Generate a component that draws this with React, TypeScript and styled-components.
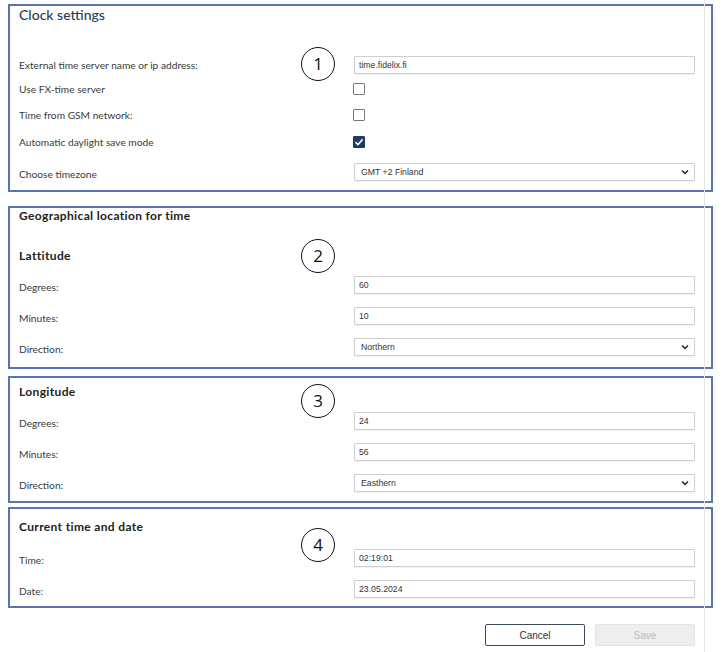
import React from "react";
import styled, { createGlobalStyle } from "styled-components";

const GlobalStyle = createGlobalStyle`
  html, body {
    margin: 0;
    padding: 0;
    background: #ffffff;
  }
  body {
    font-family: Lato, "Open Sans", "Liberation Sans", sans-serif;
    color: #333333;
  }
`;

type RowData =
  | { kind: "input"; label: string; value: string }
  | { kind: "select"; label: string; value: string }
  | { kind: "check"; label: string; checked: boolean };

export default function App() {
  return (
    <Page>
      <GlobalStyle />

      <Section $top={0} $bottom={2}>
        <Marker $top={41}>1</Marker>
        <Title>Clock settings</Title>
        <Rows $gap={27}>
          <Row $h={26}>
            <Label>External time server name or ip address:</Label>
            <TextBox value="time.fidelix.fi" readOnly />
          </Row>
          <Row $h={22}>
            <Label>Use FX-time server</Label>
            <Check $checked={false} />
          </Row>
          <Row $h={29}>
            <Label>Time from GSM network:</Label>
            <Check $checked={false} />
          </Row>
          <Row $h={26}>
            <Label>Automatic daylight save mode</Label>
            <Check $checked={true}>
              <svg width="10" height="10" viewBox="0 0 10 10">
                <path d="M1.5 5.2 L4 7.5 L8.6 2.4" fill="none" stroke="#fff" strokeWidth="1.6" />
              </svg>
            </Check>
          </Row>
          <Row $h={33}>
            <Label $shift={2}>Choose timezone</Label>
            <SelectBox value="GMT +2 Finland" />
          </Row>
        </Rows>
      </Section>

      <Section $top={14} $bottom={5}>
        <Marker $top={31}>2</Marker>
        <Heading>Geographical location for time</Heading>
        <SubHeading $gap={24}>Lattitude</SubHeading>
        <FieldList
          gap={5}
          rows={[
            { kind: "input", label: "Degrees:", value: "60" },
            { kind: "input", label: "Minutes:", value: "10" },
            { kind: "select", label: "Direction:", value: "Northern" },
          ]}
        />
      </Section>

      <Section $top={7} $bottom={3} $pad={6}>
        <Marker $top={6}>3</Marker>
        <SubHeading $gap={0}>Longitude</SubHeading>
        <FieldList
          gap={5}
          rows={[
            { kind: "input", label: "Degrees:", value: "24" },
            { kind: "input", label: "Minutes:", value: "56" },
            { kind: "select", label: "Direction:", value: "Easthern" },
          ]}
        />
      </Section>

      <Section $top={4} $bottom={2} $pad={10}>
        <Marker $top={19}>4</Marker>
        <SubHeading $gap={0}>Current time and date</SubHeading>
        <FieldList
          gap={7}
          rows={[
            { kind: "input", label: "Time:", value: "02:19:01" },
            { kind: "input", label: "Date:", value: "23.05.2024" },
          ]}
        />
      </Section>

      <Footer>
        <Button>Cancel</Button>
        <Button $disabled>Save</Button>
      </Footer>
    </Page>
  );
}

function FieldList({ rows, gap }: { rows: RowData[]; gap: number }) {
  return (
    <Rows $gap={gap}>
      {rows.map((r) => (
        <Row key={r.label} $h={31}>
          <Label $shift={2}>{r.label}</Label>
          {r.kind === "input" && <TextBox value={r.value} readOnly />}
          {r.kind === "select" && <SelectBox value={r.value} />}
          {r.kind === "check" && <Check $checked={r.checked} />}
        </Row>
      ))}
    </Rows>
  );
}

function SelectBox({ value }: { value: string }) {
  return (
    <SelectWrap>
      <span>{value}</span>
      <svg width="8" height="6" viewBox="0 0 8 6">
        <path d="M1 1.5 L4 4.5 L7 1.5" fill="none" stroke="#222" strokeWidth="1.5" />
      </svg>
    </SelectWrap>
  );
}

const Page = styled.div`
  position: relative;
  width: 728px;
  height: 652px;
  padding-top: 4px;
  box-sizing: border-box;
  overflow: hidden;

  &::after {
    content: "";
    position: absolute;
    top: 0;
    bottom: 0;
    left: 704px;
    width: 1px;
    background: #e6e6e6;
  }
`;

const Section = styled.section<{ $top: number; $bottom: number; $pad?: number }>`
  position: relative;
  margin: ${(p) => p.$top}px 0 0 8px;
  width: 705px;
  box-sizing: border-box;
  border: 2px solid #5a74ad;
  padding: ${(p) => p.$pad ?? 0}px 16px ${(p) => p.$bottom}px 9px;
  display: flex;
  flex-direction: column;
`;

const Marker = styled.div<{ $top: number }>`
  position: absolute;
  left: 291px;
  top: ${(p) => p.$top}px;
  width: 34px;
  height: 34px;
  border: 1px solid #111;
  border-radius: 50%;
  display: flex;
  align-items: center;
  justify-content: center;
  font-family: "Open Sans", "Liberation Sans", sans-serif;
  font-size: 17px;
  color: #111;
  background: #fff;
  box-sizing: border-box;
  padding-bottom: 2px;
  z-index: 2;
`;

const Title = styled.h2`
  margin: 0;
  height: 19px;
  line-height: 17px;
  font-size: 14px;
  font-weight: 500;
  color: #2a3d55;
`;

const Heading = styled.h3`
  margin: 0;
  height: 16px;
  line-height: 16px;
  font-size: 12px;
  font-weight: 700;
  color: #222;
  letter-spacing: 0.35px;
`;

const SubHeading = styled(Heading)<{ $gap: number }>`
  margin-top: ${(p) => p.$gap}px;
`;

const Rows = styled.div<{ $gap: number }>`
  display: flex;
  flex-direction: column;
  margin-top: ${(p) => p.$gap}px;
`;

const Row = styled.div<{ $h: number }>`
  display: grid;
  grid-template-columns: 335px 1fr;
  align-items: center;
  height: ${(p) => p.$h}px;
`;

const Label = styled.span<{ $shift?: number }>`
  font-size: 10.2px;
  color: #3a3a3a;
  position: relative;
  top: ${(p) => p.$shift ?? 0}px;
`;

const fieldBase = `
  height: 18px;
  box-sizing: border-box;
  border: 1px solid #cfcfcf;
  border-radius: 1px;
  box-shadow: 0 1px 1px rgba(0, 0, 0, 0.06);
  background: #fff;
  font-family: "Liberation Sans", Arial, sans-serif;
  font-size: 8.7px;
  color: #333;
`;

const TextBox = styled.input`
  ${fieldBase}
  width: 100%;
  padding: 0 4px;
  outline: none;
`;

const SelectWrap = styled.div`
  ${fieldBase}
  width: 100%;
  display: flex;
  align-items: center;
  justify-content: space-between;
  padding: 0 5px 0 6px;
`;

const Check = styled.span<{ $checked: boolean }>`
  width: 12px;
  height: 12px;
  box-sizing: border-box;
  border-radius: 1px;
  border: 1px solid ${(p) => (p.$checked ? "#1f3c63" : "#7a7a7a")};
  background: ${(p) => (p.$checked ? "#1f3c63" : "#fff")};
  display: flex;
  align-items: center;
  justify-content: center;
  margin-left: -1px;
`;

const Footer = styled.div`
  display: flex;
  justify-content: flex-end;
  gap: 10px;
  width: 695px;
  margin-top: 16px;
`;

const Button = styled.button<{ $disabled?: boolean }>`
  width: 100px;
  height: 22px;
  box-sizing: border-box;
  border-radius: 2px;
  font-family: "Liberation Sans", Arial, sans-serif;
  font-size: 10px;
  border: 1px solid ${(p) => (p.$disabled ? "#e4e4e4" : "#3b4a5c")};
  background: ${(p) => (p.$disabled ? "#eeeeee" : "#ffffff")};
  color: ${(p) => (p.$disabled ? "#bdbdbd" : "#333")};
  padding: 0;
`;
